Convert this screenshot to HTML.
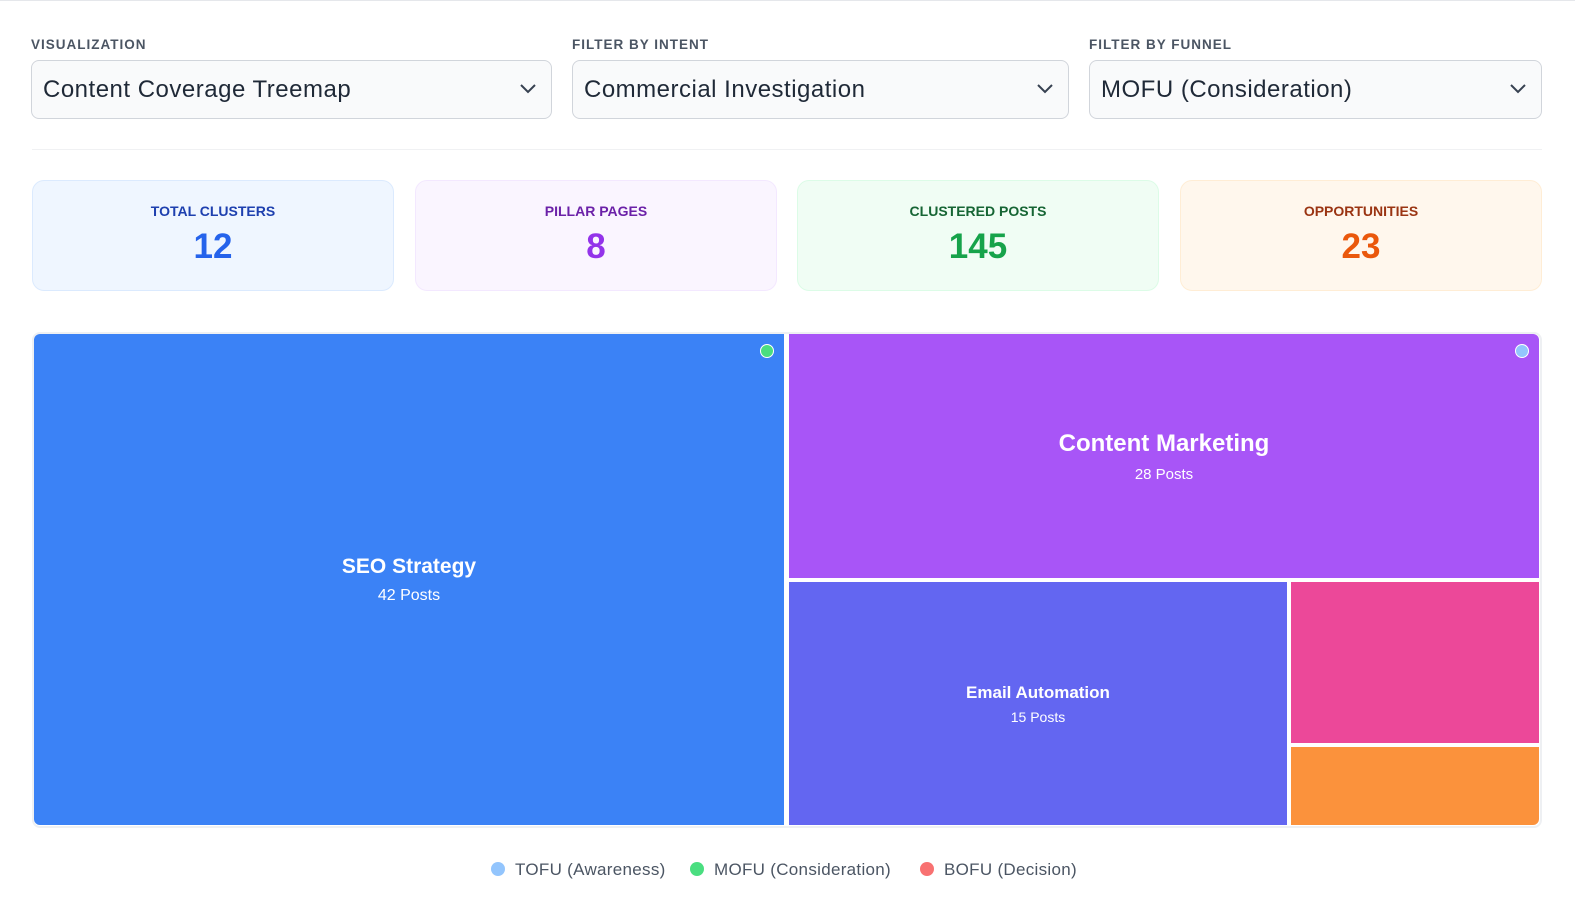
<!DOCTYPE html>
<html><head><meta charset="utf-8"><style>
*{box-sizing:border-box;margin:0;padding:0}
html{overflow:hidden;width:1575px;height:916px}
body{width:1575px;height:916px;background:#fff;font-family:"Liberation Sans",sans-serif;position:relative;overflow:hidden;border-top:1px solid #e5e7eb}
.lbl{position:absolute;top:36px;font-size:13.5px;font-weight:bold;letter-spacing:1px;color:#4b5563}
.sel{position:absolute;top:59px;height:59px;border:1px solid #d1d5db;border-radius:8px;background:#f9fafb;font-size:24px;color:#1f2937;padding:15px 11px;letter-spacing:.5px}
.sel svg{position:absolute;right:14px;top:21px}
.hr{position:absolute;left:32px;right:33px;top:148px;border-top:1px solid #f0f1f3}
.card{position:absolute;top:179px;width:362px;height:111px;border-radius:12px;text-align:center;border:1px solid}
.card .t{margin-top:22px;font-size:14px;font-weight:bold}
.card .n{margin-top:8px;font-size:35px;font-weight:bold}
.tm{position:absolute;left:32px;top:331px;width:1510px;height:496px;border:2px solid #eef0f3;border-radius:8px;background:#fff}
.b{position:absolute;color:#fff;text-align:center;display:flex;flex-direction:column;justify-content:center}
.b .h{font-weight:bold}
.dot{position:absolute;width:14px;height:14px;border-radius:50%;border:1px solid #fff}
.lg{position:absolute;top:859px;font-size:17px;color:#4b5563;letter-spacing:.3px}
.lg i{display:inline-block;width:14px;height:14px;border-radius:50%;vertical-align:-1px;margin-right:10px}
</style></head><body>
<div class="lbl" style="left:31px">VISUALIZATION</div>
<div class="lbl" style="left:572px">FILTER BY INTENT</div>
<div class="lbl" style="left:1089px">FILTER BY FUNNEL</div>
<div class="sel" style="left:31px;width:521px">Content Coverage Treemap<svg width="18" height="12" viewBox="0 0 18 12"><path d="M2 3l7 7 7-7" fill="none" stroke="#374151" stroke-width="2"/></svg></div>
<div class="sel" style="left:572px;width:497px">Commercial Investigation<svg width="18" height="12" viewBox="0 0 18 12"><path d="M2 3l7 7 7-7" fill="none" stroke="#374151" stroke-width="2"/></svg></div>
<div class="sel" style="left:1089px;width:453px">MOFU (Consideration)<svg width="18" height="12" viewBox="0 0 18 12"><path d="M2 3l7 7 7-7" fill="none" stroke="#374151" stroke-width="2"/></svg></div>
<div class="hr"></div>
<div class="card" style="left:32px;background:#eff6ff;border-color:#dbeafe"><div class="t" style="color:#1e40af">TOTAL CLUSTERS</div><div class="n" style="color:#2563eb">12</div></div>
<div class="card" style="left:415px;background:#faf5ff;border-color:#f3e8ff"><div class="t" style="color:#6b21a8">PILLAR PAGES</div><div class="n" style="color:#9333ea">8</div></div>
<div class="card" style="left:797px;background:#f0fdf4;border-color:#dcfce7"><div class="t" style="color:#166534">CLUSTERED POSTS</div><div class="n" style="color:#16a34a">145</div></div>
<div class="card" style="left:1180px;background:#fff7ed;border-color:#ffedd5"><div class="t" style="color:#9a3412">OPPORTUNITIES</div><div class="n" style="color:#ea580c">23</div></div>
<div class="tm"></div>
<div class="b" style="left:34px;top:333px;width:750px;height:491px;background:#3b82f6;border-radius:6px 0 0 6px"><div class="h" style="font-size:21px">SEO Strategy</div><div style="font-size:16px;margin-top:8px">42 Posts</div></div>
<div class="dot" style="left:760px;top:343px;background:#4ade80"></div>
<div class="b" style="left:789px;top:333px;width:750px;height:244px;background:#a855f7;border-radius:0 6px 0 0"><div class="h" style="font-size:24px">Content Marketing</div><div style="font-size:15px;margin-top:8px">28 Posts</div></div>
<div class="dot" style="left:1515px;top:343px;background:#93c5fd"></div>
<div class="b" style="left:789px;top:581px;width:498px;height:243px;background:#6366f1"><div class="h" style="font-size:17px">Email Automation</div><div style="font-size:14px;margin-top:6px">15 Posts</div></div>
<div class="b" style="left:1291px;top:581px;width:248px;height:161px;background:#ec4899"></div>
<div class="b" style="left:1291px;top:746px;width:248px;height:78px;background:#fb923c;border-radius:0 0 6px 0"></div>
<div class="lg" style="left:491px"><i style="background:#93c5fd"></i>TOFU (Awareness)</div>
<div class="lg" style="left:690px"><i style="background:#4ade80"></i>MOFU (Consideration)</div>
<div class="lg" style="left:920px"><i style="background:#f87171"></i>BOFU (Decision)</div>
</body></html>
